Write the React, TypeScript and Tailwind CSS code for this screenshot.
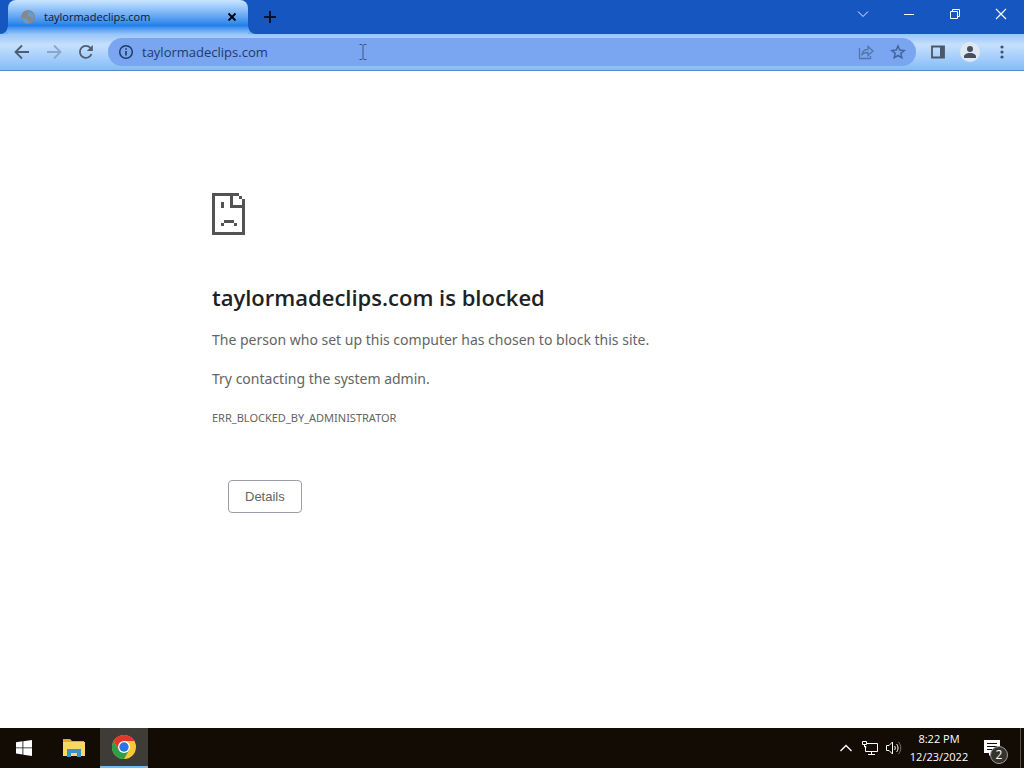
import type { ReactNode } from "react";

const SITE = "taylormadeclips.com";

function IconButton({ label, className = "", children }: { label: string; className?: string; children?: ReactNode }) {
  return (
    <button type="button" aria-label={label} className={`flex shrink-0 items-center justify-center ${className}`}>
      {children}
    </button>
  );
}

function TabStrip() {
  return (
    <header className="flex h-[34px] items-stretch bg-[#1656c1] pl-2 text-[#051a38]">
      <div className="relative flex w-60 items-center rounded-t-lg bg-linear-to-b from-[#c9e6ff] via-[#2080ea] via-75% to-[#93c4fa] pr-2 pl-3">
        <svg className="absolute bottom-0 -left-2 h-2 w-2" viewBox="0 0 8 8" fill="#6fb0f6">
          <path d="M8 0v8H0a8 8 0 0 0 8-8" />
        </svg>
        <svg className="absolute -right-2 bottom-0 h-2 w-2" viewBox="0 0 8 8" fill="#6fb0f6">
          <path d="M0 0v8h8a8 8 0 0 1-8-8" />
        </svg>
        <svg className="h-4 w-4 shrink-0" viewBox="0 0 16 16">
          <circle cx="8" cy="8" r="7" fill="#85898e" />
          <path d="M8 3.500c2-1 4 0 5 2l.500 3c-1 1-2 0-2.500-1L8 7zM2 9l4 .500 2 2v2.500c-3 0-5-2-6-5z" fill="#5a9fe2" />
        </svg>
        <span className="ml-2 flex-1 text-[11px]">{SITE}</span>
        <IconButton label="Close tab" className="h-4 w-4">
          <svg className="h-4 w-4" viewBox="0 0 16 16" stroke="#000" strokeWidth="1.800">
            <path d="M4.500 4.500l7 7M11.500 4.500l-7 7" />
          </svg>
        </IconButton>
      </div>
      <IconButton label="New tab" className="ml-2 w-7">
        <svg className="h-4 w-4" viewBox="0 0 16 16" stroke="#06122e" strokeWidth="2">
          <path d="M8 2v12M2 8h12" />
        </svg>
      </IconButton>
      <div className="ml-auto flex h-7">
        <IconButton label="Search tabs" className="w-[46px]">
          <svg className="h-3 w-3" viewBox="0 0 12 12" fill="none" stroke="#e4f2ff">
            <path d="M1 3.500l5 5 5-5" />
          </svg>
        </IconButton>
        <IconButton label="Minimize" className="w-[46px]">
          <svg className="h-3 w-3" viewBox="0 0 12 12" stroke="#fff">
            <path d="M1 6.500h10" />
          </svg>
        </IconButton>
        <IconButton label="Restore" className="w-[46px]">
          <svg className="h-3 w-3" viewBox="0 0 12 12" fill="none" stroke="#fff">
            <path d="M1.500 3.500h7v7h-7zM3.500 3.500v-2h7v7h-2" />
          </svg>
        </IconButton>
        <IconButton label="Close" className="w-[46px]">
          <svg className="h-3 w-3" viewBox="0 0 12 12" stroke="#fff" strokeWidth="1.200">
            <path d="M1 1l10 10M11 1L1 11" />
          </svg>
        </IconButton>
      </div>
    </header>
  );
}

function Toolbar() {
  return (
    <div className="flex h-[37px] items-center border-b border-[#5589c8] bg-linear-to-b from-[#98c4f8] via-[#c6e0fc] via-30% to-[#84bcf8] pr-2 pl-2">
      <IconButton label="Back" className="h-7 w-7">
        <svg className="h-4 w-4" viewBox="0 0 16 16" fill="none" stroke="#4d5d72" strokeWidth="1.800">
          <path d="M15 8H2.500M8 1.500L1.500 8 8 14.500" />
        </svg>
      </IconButton>
      <IconButton label="Forward" className="ml-1 h-7 w-7">
        <svg className="h-4 w-4" viewBox="0 0 16 16" fill="none" stroke="#8ba6c9" strokeWidth="1.800">
          <path d="M1 8h12.500M8 1.500L14.500 8 8 14.500" />
        </svg>
      </IconButton>
      <IconButton label="Reload" className="ml-1 h-7 w-7">
        <svg className="h-4 w-4" viewBox="0 0 16 16" fill="none" stroke="#4d5d72" strokeWidth="1.800">
          <path d="M13.500 10A6 6 0 1 1 12.500 4l1 1" />
          <path d="M14.800 1v6h-6z" fill="#4d5d72" stroke="none" />
        </svg>
      </IconButton>
      <div className="relative ml-2 flex h-7 flex-1 items-center rounded-full bg-[#7aa5f0] pr-2.5 pl-2.5">
        <IconButton label="View site information" className="h-4 w-4">
          <svg className="h-4 w-4" viewBox="0 0 16 16" fill="none" stroke="#1f3a66">
            <circle cx="8" cy="8" r="6.300" strokeWidth="1.500" />
            <path d="M8 7v4.500M8 4.200v1.600" strokeWidth="1.600" />
          </svg>
        </IconButton>
        <input
          type="text"
          aria-label="Address and search bar"
          defaultValue={SITE}
          className="ml-2 min-w-0 flex-1 bg-transparent pt-0.5 text-[13px] text-[#1d3a70] outline-none"
        />
        {/* text pointer over the address bar */}
        <svg className="pointer-events-none absolute top-1.5 left-[251px] h-4 w-2" viewBox="0 0 8 16" fill="none" stroke="#3f5480">
          <path d="M.500 .500h2.500l1 1 1-1h2.500M4 1.500v13M.500 15.500h2.500l1-1 1 1h2.500" />
        </svg>
        <IconButton label="Share this page" className="h-4 w-4">
          <svg className="h-4 w-4" viewBox="0 0 16 16" fill="none" stroke="#5276ab" strokeWidth="1.300">
            <path d="M1.500 4v10.500h11V12" />
            <path d="M4 10.500c.500-3.500 2.500-5 6-5V2.500l5 4.500-5 4.500v-3c-2.500 0-4.500.500-6 2z" />
          </svg>
        </IconButton>
        <IconButton label="Bookmark this tab" className="ml-4 h-4 w-4">
          <svg className="h-4 w-4" viewBox="0 0 16 16" fill="none" stroke="#41659b" strokeWidth="1.500">
            <path d="M8 2l1.700 4.100 4.500.400-3.400 2.900 1 4.400L8 11.500l-3.800 2.300 1-4.400-3.400-2.900 4.500-.400z" />
          </svg>
        </IconButton>
      </div>
      <IconButton label="Side panel" className="ml-2 h-7 w-7">
        <svg className="h-4 w-4" viewBox="0 0 16 16">
          <path d="M2 2.500h12v11H2z" fill="none" stroke="#4a5766" strokeWidth="1.800" />
          <path d="M10 2h4v12h-4z" fill="#4a5766" />
        </svg>
      </IconButton>
      <IconButton label="Profile" className="ml-1 h-7 w-7">
        <svg className="h-5 w-5" viewBox="0 0 20 20">
          <circle cx="10" cy="10" r="10" fill="#dfe8f2" />
          <circle cx="10" cy="7" r="3" fill="#454f5e" />
          <path d="M4 16v-1.500c0-2.200 3-3.500 6-3.500s6 1.300 6 3.500V16z" fill="#454f5e" />
        </svg>
      </IconButton>
      <IconButton label="Customize and control" className="ml-1 h-7 w-7">
        <svg className="h-4 w-4" viewBox="0 0 16 16" fill="#3f5473">
          <circle cx="8" cy="3" r="1.600" />
          <circle cx="8" cy="8" r="1.600" />
          <circle cx="8" cy="13" r="1.600" />
        </svg>
      </IconButton>
    </div>
  );
}

function SadPage() {
  return (
    <svg className="h-[42px] w-[33px]" viewBox="0 0 33 42" fill="#535353" shapeRendering="crispEdges">
      <path d="M0 0h27v3H3v36h27V6h3v36H0z" />
      <path d="M27 3h3v3h-3zM18 3h3v9h9v3H18z" />
      <path d="M9 9h3v6H9zM12 27h10v3H12zM9 30h3v3H9zM22 30h3v3h-3z" />
    </svg>
  );
}

function ErrorPage() {
  return (
    <main className="flex-1 bg-white px-6 pt-[122px] text-[#646464]">
      <div className="mx-auto max-w-[600px]">
        <SadPage />
        <h1 className="mt-12 text-[22px] leading-7 font-semibold text-[#202124]">{SITE} is blocked</h1>
        <div className="mt-[17px] flex flex-col gap-[15px] font-['Noto_Sans',sans-serif]">
          <p className="text-sm leading-6">The person who set up this computer has chosen to block this site.</p>
          <p className="text-sm leading-6">Try contacting the system admin.</p>
          <p className="text-[11px] leading-6">ERR_BLOCKED_BY_ADMINISTRATOR</p>
        </div>
        <button
          type="button"
          className="mt-[50px] ml-4 h-[33px] rounded border border-[#9aa0a6] px-4 font-['Liberation_Sans',Arial,sans-serif] text-[13px]"
        >
          Details
        </button>
      </div>
    </main>
  );
}

function ChromeLogo() {
  return (
    <svg className="h-6 w-6" viewBox="0 0 24 24">
      <circle cx="12" cy="12" r="12" fill="#fbc934" />
      <path d="M12 12L6.800 15 1.600 6A12 12 0 0 0 12 24l5.200-9z" fill="#2f9e4a" />
      <path d="M1.600 6a12 12 0 0 1 20.800 0H12L6.800 15z" fill="#e2382b" />
      <circle cx="12" cy="12" r="6" fill="#fff" />
      <circle cx="12" cy="12" r="4.700" fill="#2b74e4" />
    </svg>
  );
}

function Taskbar() {
  return (
    <footer className="flex h-10 items-stretch bg-[#120c04] text-white">
      <IconButton label="Start" className="w-12">
        <svg className="h-4 w-4" viewBox="0 0 16 16" fill="#fff">
          <path d="M0 2.200l6.500-.900v6.200H0zM7.300 1.200L16 0v7.500H7.300zM0 8.300h6.500v6.200L0 13.600zM7.300 8.300H16V16l-8.700-1.300z" />
        </svg>
      </IconButton>
      <IconButton label="File Explorer" className="ml-0.5 w-12">
        <svg className="h-5 w-[22px]" viewBox="0 0 22 20">
          <path d="M0 1h7l2 2h12v14H0z" fill="#e5a92f" />
          <path d="M0 4h22v14H0z" fill="#fbd865" />
          <path d="M4 11h14v8h-4v-4H8v4H4z" fill="#3f8fca" />
        </svg>
      </IconButton>
      <IconButton label="Google Chrome" className="ml-0.5 w-12 border-b-2 border-[#76b9ed] bg-[#3f3b37]">
        <ChromeLogo />
      </IconButton>
      <div className="ml-auto flex items-stretch">
        <IconButton label="Show hidden icons" className="w-6">
          <svg className="h-3 w-3" viewBox="0 0 12 12" fill="none" stroke="#fff" strokeWidth="1.300">
            <path d="M.500 9L6 3.500 11.500 9" />
          </svg>
        </IconButton>
        <IconButton label="Network" className="w-6">
          <svg className="h-4 w-4" viewBox="0 0 16 16" fill="none" stroke="#fff">
            <path d="M5 3.500h10.500v8H3.500V6M9.500 11.500v3M6 14.500h7" />
            <path d="M.500 1.500h4v3h-4zM2.500 4.500V7h2" />
          </svg>
        </IconButton>
        <IconButton label="Volume" className="w-6">
          <svg className="h-4 w-4" viewBox="0 0 16 16" fill="none" stroke="#fff">
            <path d="M.500 5.500h2.500l3.500-3.500v12L3 10.500H.500z" />
            <path d="M8.500 6c1 1 1 3 0 4M10.500 4c2 2 2 6 0 8" />
            <path d="M12.500 2c3 3.500 3 8.500 0 12" stroke="#77736f" />
          </svg>
        </IconButton>
        <button type="button" className="w-[66px] text-center text-[11px] leading-[18px]">
          <span className="block">8:22 PM</span>
          <span className="block">12/23/2022</span>
        </button>
        <IconButton label="Notifications" className="relative mr-2 w-10">
          <svg className="h-4 w-4" viewBox="0 0 16 16">
            <path d="M0 0h16v13H8l-3 3v-3H0z" fill="#fff" />
            <path d="M3 3.500h10M3 6.500h10M3 9.500h6" stroke="#120c04" />
          </svg>
          <span className="absolute right-1 bottom-1 flex h-[18px] w-[18px] items-center justify-center rounded-full border border-[#a09c98] bg-[#35322f] text-xs">
            2
          </span>
        </IconButton>
        <IconButton label="Show desktop" className="w-1 border-l border-[#55504a]" />
      </div>
    </footer>
  );
}

export default function App() {
  return (
    <div className="flex min-h-screen flex-col font-['Open_Sans','Noto_Sans',sans-serif]">
      <TabStrip />
      <Toolbar />
      <ErrorPage />
      <Taskbar />
    </div>
  );
}
